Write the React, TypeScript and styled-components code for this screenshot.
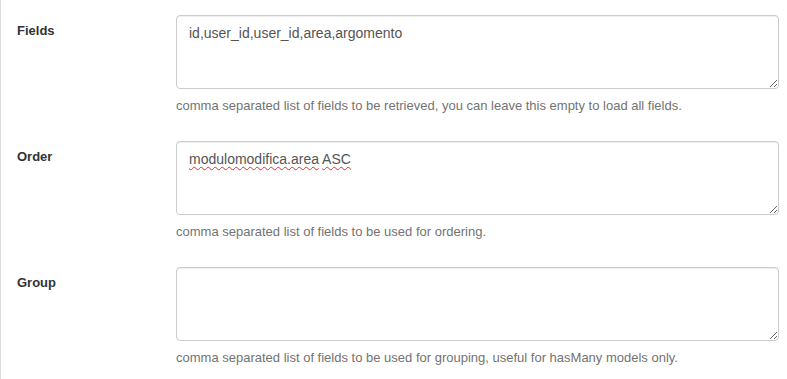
import React from 'react'
import styled, { createGlobalStyle } from 'styled-components'

const GlobalStyle = createGlobalStyle`
  html, body {
    margin: 0;
    padding: 0;
    background: #fff;
    font-family: "Liberation Sans", Arial, sans-serif;
    color: #333;
  }
  * { box-sizing: border-box; }
`

const Panel = styled.div`
  width: 787px;
  height: 379px;
  border-left: 1px solid #dcdcdc;
  padding: 15px 8px 0 16px;
  display: flex;
  flex-direction: column;
  gap: 26px;
  overflow: hidden;
`

const Row = styled.div`
  display: grid;
  grid-template-columns: 159px 1fr;
`

const Label = styled.label`
  font-size: 13px;
  font-weight: 700;
  line-height: 18px;
  padding-top: 7px;
  color: #333;
`

const Field = styled.div`
  display: flex;
  flex-direction: column;
  gap: 8px;
`

const AreaWrap = styled.div`
  position: relative;
  height: 74px;
`

const Area = styled.textarea`
  display: block;
  width: 100%;
  height: 74px;
  padding: 7px 12px;
  border: 1px solid #ccc;
  border-radius: 4px;
  box-shadow: inset 0 1px 1px rgba(0, 0, 0, 0.075);
  font-family: "Liberation Sans", Arial, sans-serif;
  font-size: 14px;
  line-height: 20px;
  color: #555;
  background: #fff;
  resize: vertical;
  outline: none;
`

const Overlay = styled.div`
  position: absolute;
  left: 13px;
  top: 8px;
  font-size: 14px;
  line-height: 20px;
  color: #555;
  pointer-events: none;
`

const Misspelled = styled.span`
  text-decoration: underline wavy #e03030;
  text-decoration-thickness: 1px;
  text-underline-offset: 2px;
`

const Help = styled.div`
  font-size: 13px;
  line-height: 18px;
  color: #737373;
`

export default function App() {
  return (
    <>
      <GlobalStyle />
      <Panel>
        <Row>
          <Label>Fields</Label>
          <Field>
            <AreaWrap>
              <Area readOnly spellCheck={false} value="id,user_id,user_id,area,argomento" />
            </AreaWrap>
            <Help>comma separated list of fields to be retrieved, you can leave this empty to load all fields.</Help>
          </Field>
        </Row>
        <Row>
          <Label>Order</Label>
          <Field>
            <AreaWrap>
              <Area readOnly spellCheck={false} value="" />
              <Overlay>
                <Misspelled>modulomodifica.area</Misspelled> <Misspelled>ASC</Misspelled>
              </Overlay>
            </AreaWrap>
            <Help>comma separated list of fields to be used for ordering.</Help>
          </Field>
        </Row>
        <Row>
          <Label>Group</Label>
          <Field>
            <AreaWrap>
              <Area readOnly spellCheck={false} value="" />
            </AreaWrap>
            <Help>comma separated list of fields to be used for grouping, useful for hasMany models only.</Help>
          </Field>
        </Row>
      </Panel>
    </>
  )
}
